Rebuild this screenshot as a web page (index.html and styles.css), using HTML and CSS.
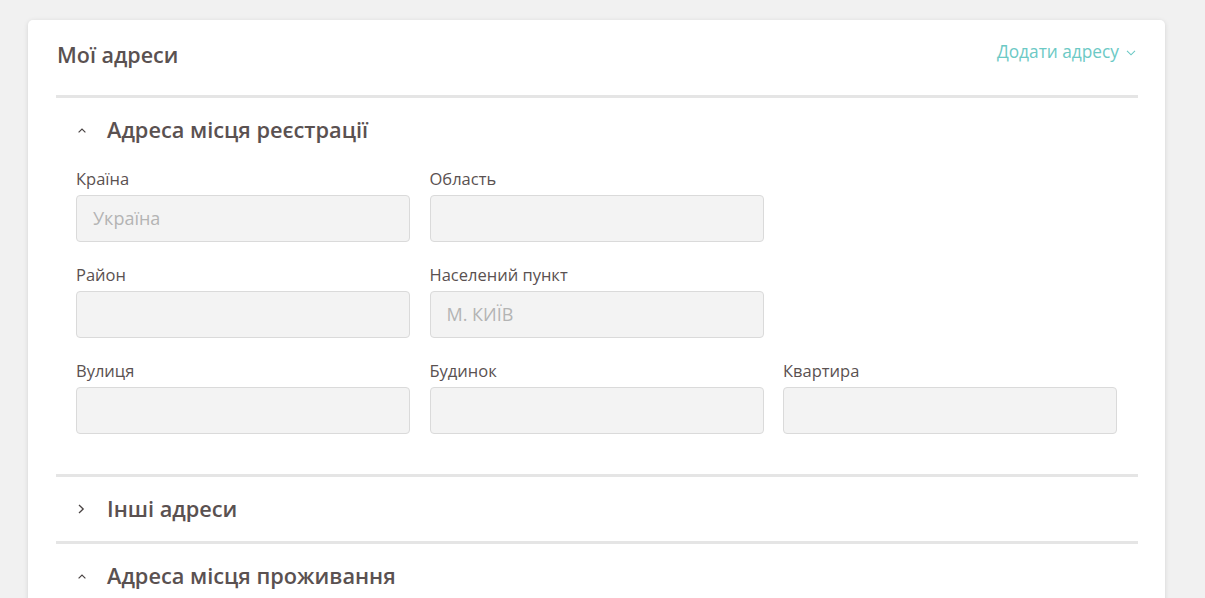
FILE: index.html
```html
<!DOCTYPE html>
<html lang="uk">
<head>
<meta charset="utf-8">
<title>Мої адреси</title>
<link rel="stylesheet" href="styles.css">
</head>
<body>
<div class="card">
  <div class="card-header">
    <h1 class="title">Мої адреси</h1>
    <a class="add-link" href="#">Додати адресу
      <svg class="add-chev" width="10" height="6" viewBox="0 0 10 6"><path d="M1 0.8 L5 4.8 L9 0.8" fill="none" stroke="#6cc9c5" stroke-width="1.1"/></svg>
    </a>
  </div>

  <section class="section">
    <div class="section-head">
      <span class="caret"><svg width="8" height="5" viewBox="0 0 8 5"><path d="M0.6 4.4 L4 1 L7.4 4.4" fill="none" stroke="#4a4444" stroke-width="1.2"/></svg></span>
      <h2 class="section-title">Адреса місця реєстрації</h2>
    </div>
    <div class="fields">
      <div class="field">
        <label class="label">Країна</label>
        <div class="input">Україна</div>
      </div>
      <div class="field">
        <label class="label">Область</label>
        <div class="input"></div>
      </div>
      <div class="field empty"></div>

      <div class="field">
        <label class="label">Район</label>
        <div class="input"></div>
      </div>
      <div class="field">
        <label class="label">Населений пункт</label>
        <div class="input">М. КИЇВ</div>
      </div>
      <div class="field empty"></div>

      <div class="field">
        <label class="label">Вулиця</label>
        <div class="input"></div>
      </div>
      <div class="field">
        <label class="label">Будинок</label>
        <div class="input"></div>
      </div>
      <div class="field">
        <label class="label">Квартира</label>
        <div class="input"></div>
      </div>
    </div>
  </section>

  <section class="section collapsed">
    <div class="section-head">
      <span class="caret"><svg width="7" height="10" viewBox="0 0 7 10"><path d="M1 1 L5.2 5 L1 9" fill="none" stroke="#4a4444" stroke-width="1.3"/></svg></span>
      <h2 class="section-title">Інші адреси</h2>
    </div>
  </section>

  <section class="section collapsed">
    <div class="section-head">
      <span class="caret"><svg width="8" height="5" viewBox="0 0 8 5"><path d="M0.6 4.4 L4 1 L7.4 4.4" fill="none" stroke="#4a4444" stroke-width="1.2"/></svg></span>
      <h2 class="section-title">Адреса місця проживання</h2>
    </div>
  </section>
</div>
</body>
</html>
```

FILE: styles.css
```css
* { box-sizing: border-box; }

html, body {
  margin: 0;
  padding: 0;
  background: #f1f1f1;
  font-family: "Open Sans", "Liberation Sans", sans-serif;
  color: #5a5151;
  overflow: hidden;
}

body {
  padding: 20px 40px 0 28px;
}

.card {
  width: 1137px;
  background: #ffffff;
  border-radius: 5px 5px 0 0;
  box-shadow: 0 1px 5px rgba(0, 0, 0, 0.12);
  padding: 0 27px 0 28px;
  min-height: 600px;
}

.card-header {
  height: 78px;
  display: flex;
  justify-content: space-between;
  align-items: flex-start;
  border-bottom: 3px solid #e5e5e5;
}

.title {
  margin: 21px 0 0 1px;
  font-size: 21.5px;
  line-height: 28px;
  font-weight: 600;
  color: #5a5151;
}

.add-link {
  margin-top: 20px;
  margin-right: 2px;
  display: flex;
  align-items: center;
  gap: 7px;
  color: #6cc9c5;
  font-size: 17.3px;
  line-height: 24px;
  text-decoration: none;
}

.add-chev { margin-top: 1px; }

.section {
  padding: 18px 0 40px 20px;
  border-bottom: 3px solid #e5e5e5;
}

.section.collapsed {
  padding-bottom: 18px;
}

.section:last-child {
  border-bottom: none;
}

.section-head {
  display: flex;
  align-items: center;
  height: 28px;
}

.caret {
  width: 31px;
  display: flex;
  align-items: center;
  padding-left: 2px;
}

.section-title {
  margin: 0;
  font-size: 21.75px;
  line-height: 28px;
  font-weight: 600;
  color: #5a5151;
}

.fields {
  margin-top: 25px;
  width: 1041px;
  display: grid;
  grid-template-columns: repeat(3, 1fr);
  column-gap: 19.5px;
  row-gap: 23px;
}

.label {
  display: block;
  font-size: 16.5px;
  line-height: 20px;
  color: #5a5151;
  margin-bottom: 6px;
}

.input {
  height: 47px;
  background: #f3f3f3;
  border: 1px solid #dadada;
  border-radius: 4px;
  padding: 0 16px;
  font-size: 18px;
  line-height: 45px;
  color: #b4b4b4;
}

.field.empty {
  height: 73px;
}
```
